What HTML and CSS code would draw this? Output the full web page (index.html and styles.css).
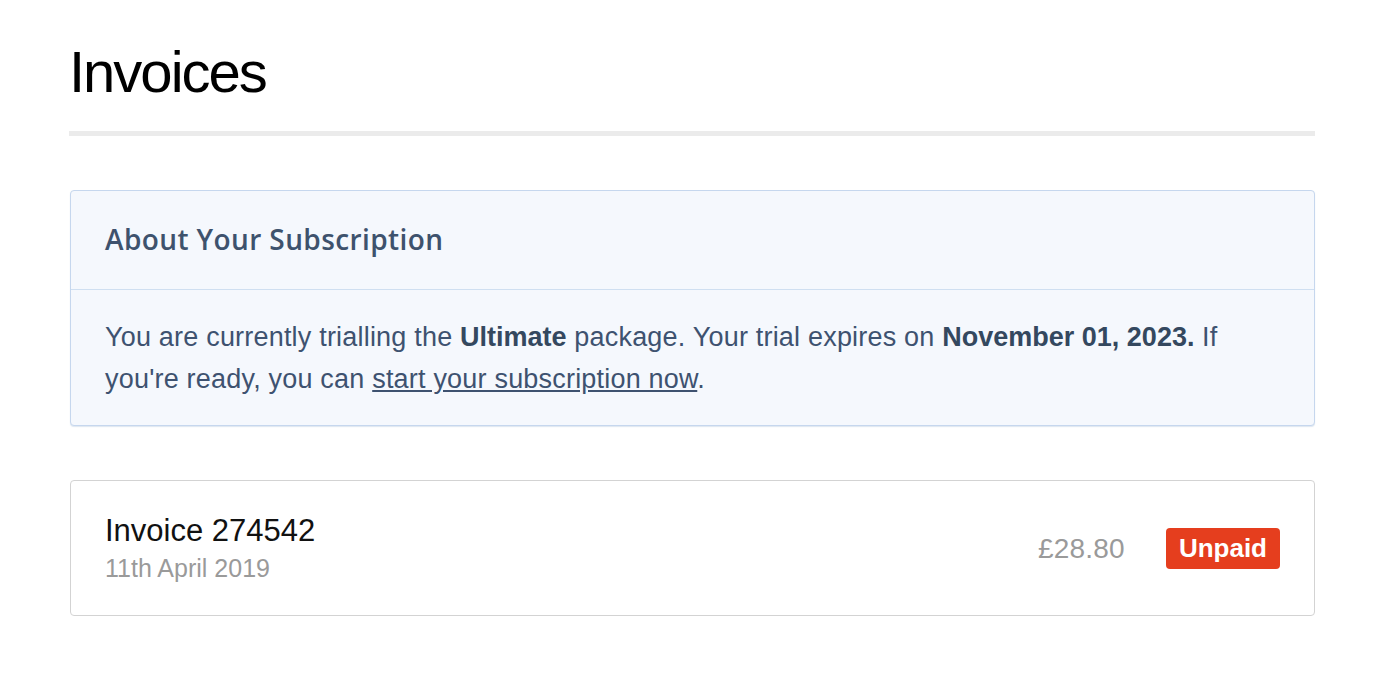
FILE: index.html
```html
<!DOCTYPE html>
<html lang="en">
<head>
<meta charset="utf-8">
<title>Invoices</title>
<link rel="stylesheet" href="styles.css">
</head>
<body>
<main class="page">
  <h1 class="title">Invoices</h1>
  <hr class="divider">
  <section class="notice">
    <div class="notice-head">About Your Subscription</div>
    <div class="notice-body">
      You are currently trialling the <strong>Ultimate</strong> package. Your trial expires on <strong>November 01, 2023.</strong> If you're ready, you can <a href="#" class="link">start your subscription now</a>.
    </div>
  </section>
  <section class="invoice">
    <div class="invoice-info">
      <div class="invoice-name">Invoice 274542</div>
      <div class="invoice-date">11th April 2019</div>
    </div>
    <div class="invoice-meta">
      <span class="invoice-price">£28.80</span>
      <span class="badge">Unpaid</span>
    </div>
  </section>
</main>
</body>
</html>
```

FILE: styles.css
```css
html, body {
  margin: 0;
  padding: 0;
  background: #ffffff;
}
body {
  font-family: "Liberation Sans", Arial, sans-serif;
  color: #000;
}
.page {
  width: 1246px;
  margin-left: 69px;
  padding-top: 37px;
}
.title {
  margin: 0;
  font-size: 58px;
  font-weight: normal;
  letter-spacing: -2px;
  line-height: 70px;
  color: #000;
}
.divider {
  margin: 24px 0 0;
  border: 0;
  height: 5px;
  background: #ebebeb;
}
.notice {
  margin-top: 54px;
  margin-left: 1px;
  border: 1px solid #c6d7ee;
  border-radius: 4px;
  background: #f5f8fd;
  box-shadow: 0 1px 1px rgba(160, 185, 215, 0.35);
}
.notice-head {
  padding: 31px 34px 33px;
  font-family: "Open Sans", "Liberation Sans", Arial, sans-serif;
  font-size: 28px;
  font-weight: 600;
  letter-spacing: 0.4px;
  line-height: 34px;
  color: #3e526d;
  border-bottom: 1px solid #cfdff1;
}
.notice-body {
  padding: 26px 34px 25px;
  font-size: 27px;
  letter-spacing: 0.2px;
  line-height: 42px;
  color: #3e5270;
}
.notice-body strong {
  font-weight: bold;
  letter-spacing: 0;
  color: #34485f;
}
.link {
  color: #3e5270;
  text-decoration: underline;
}
.invoice {
  margin-top: 54px;
  margin-left: 1px;
  border: 1px solid #d3d3d3;
  border-radius: 4px;
  padding: 32px 34px 28px;
  display: flex;
  align-items: center;
  justify-content: space-between;
}
.invoice-name {
  font-size: 31px;
  line-height: 36px;
  color: #111;
}
.invoice-date {
  font-size: 25px;
  line-height: 38px;
  color: #9a9a9a;
}
.invoice-meta {
  display: flex;
  align-items: center;
  gap: 41px;
  margin-bottom: 3px;
}
.invoice-price {
  font-size: 28px;
  letter-spacing: 0.2px;
  color: #9a9a9a;
}
.badge {
  background: #e53e1e;
  color: #fff;
  font-weight: bold;
  font-size: 26px;
  line-height: 41px;
  padding: 0 13px;
  border-radius: 4px;
}
```
